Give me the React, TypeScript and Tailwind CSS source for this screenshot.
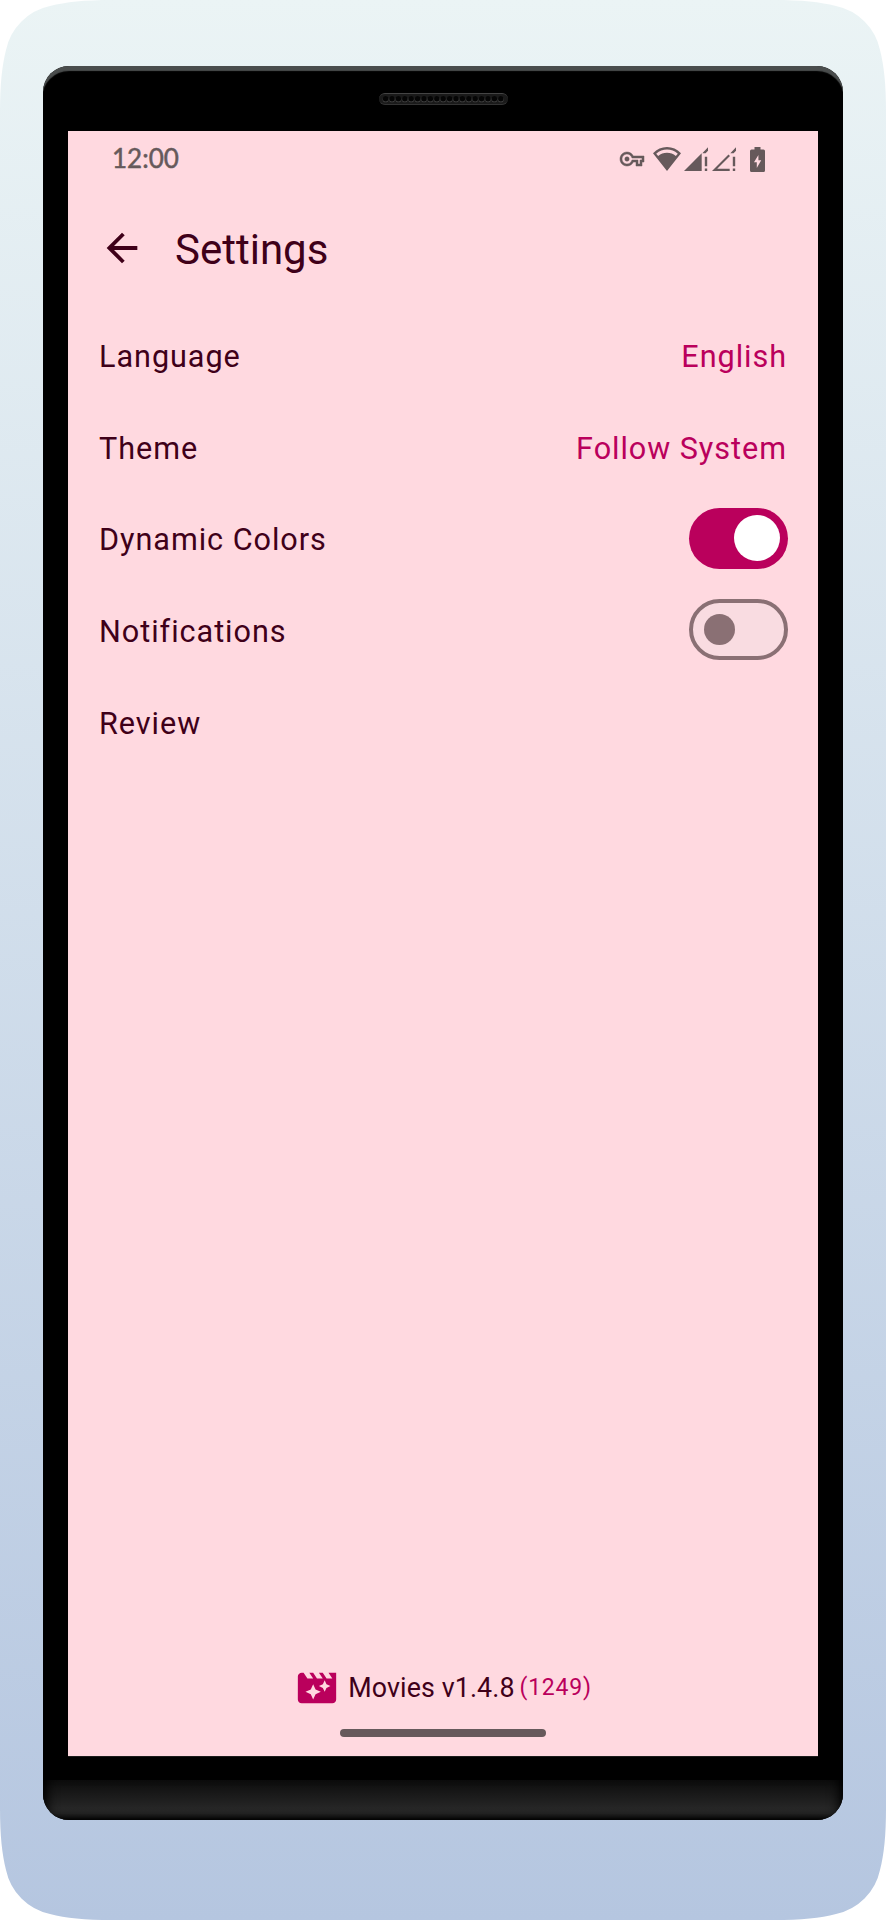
import React from "react";

function KeyIcon() {
  return (
    <svg className="h-6 w-6 overflow-visible" viewBox="0 0 24 24" fill="currentColor">
      <path
        stroke="currentColor"
        strokeWidth="0.5"
        d="M22 19h-6v-4h-2.68c-1.14 2.42-3.6 4-6.32 4-3.86 0-7-3.14-7-7s3.14-7 7-7c2.72 0 5.17 1.58 6.32 4H24v6h-2v4zm-4-2h2v-4h2v-2H11.94l-.23-.67C11.01 8.34 9.11 7 7 7c-2.76 0-5 2.24-5 5s2.24 5 5 5c2.11 0 4.01-1.34 4.71-3.33l.23-.67H18v4zM7 14.2a2.2 2.2 0 1 1 0-4.4 2.2 2.2 0 0 1 0 4.4z"
      />
    </svg>
  );
}

function WifiIcon() {
  return (
    <svg className="h-6 w-7" viewBox="0 0 28 24" fill="currentColor">
      <path
        fillRule="evenodd"
        d="M0 6.3Q6 0 14 0T28 6.3L14 23.9ZM3.2 6.8L5.2 9Q9 5.8 14 5.8T22.8 9L24.8 6.8Q20 2.6 14 2.6T3.2 6.8Z"
      />
    </svg>
  );
}

function SignalIcon({ filled }: { filled: boolean }) {
  return (
    <svg className="h-6 w-6" viewBox="0 0 24 24" fill="currentColor">
      {filled ? <path d="M0 24L17.7 6.3V24Z" /> : <path d="M0 24L16.5 7.5L18 9L5.2 21.8H17.7V24Z" />}
      <path d="M18.3 6.2L24 0.3V3.8L21.6 6.2ZM20.8 9.8H23.2V19.2H20.8ZM20.8 21.6H23.2V24H20.8Z" />
    </svg>
  );
}

function BatteryIcon() {
  return (
    <svg className="h-[25px] w-[15px]" viewBox="0 0 15 25" fill="currentColor">
      <path
        fillRule="evenodd"
        d="M4.5 0H10.5V2.5H13.5Q15 2.5 15 4V23.5Q15 25 13.5 25H1.5Q0 25 0 23.5V4Q0 2.5 1.5 2.5H4.5ZM8.4 8L4 15.2H6.8V21L11.2 13.2H8.4Z"
      />
    </svg>
  );
}

function Speaker() {
  return (
    <div className="flex h-3 w-[129px] items-center justify-center rounded-full border-t border-b border-t-[#444] border-b-[#333] bg-[#1a1a1a]">
      <svg className="h-2 w-[122px]" viewBox="0 0 122 8">
        {Array.from({ length: 19 }, (_, i) => (
          <g key={i}>
            <circle cx={3.6 + i * 6.4} cy={4.4} r={2.9} fill="#444" />
            <circle cx={3.6 + i * 6.4} cy={3.7} r={2.7} fill="#050505" />
          </g>
        ))}
      </svg>
    </div>
  );
}

function Switch({ on }: { on: boolean }) {
  return on ? (
    <div className="-mr-px mb-1 flex h-[61px] w-[99.5px] items-center justify-end rounded-full bg-[#ba005c] pr-[7.7px]">
      <div className="h-[46px] w-[46px] rounded-full bg-white" />
    </div>
  ) : (
    <div className="-mr-px mb-1 flex h-[61px] w-[99.5px] items-center rounded-full border-4 border-[#8a7074] bg-[#f9dce1] pl-[11.3px]">
      <div className="h-[31px] w-[31px] rounded-full bg-[#8a7074]" />
    </div>
  );
}

function Row({ label, children }: { label: string; children?: React.ReactNode }) {
  return (
    <div className="flex h-[91.7px] items-center justify-between px-[31px] text-[30.6px] tracking-[0.96px]">
      <span>{label}</span>
      {children}
    </div>
  );
}

export default function App() {
  return (
    <div className="h-[1920px] w-[886px] bg-white font-['Roboto',sans-serif]">
      <div className="flex h-full w-full flex-col items-center bg-linear-to-b from-[#ebf4f5] to-[#b5c6e0] pt-[66px] [clip-path:path('M0_112C0_84_2_66_6_50A57_57_0_0_1_50_6C66_2_84_0_112_0H774C802_0_820_2_836_6A57_57_0_0_1_880_50C884_66_886_84_886_112V1808C886_1836_884_1854_880_1870A57_57_0_0_1_836_1914C820_1918_802_1920_774_1920H112C84_1920_66_1918_50_1914A57_57_0_0_1_6_1870C2_1854_0_1836_0_1808Z')]">
        <div className="flex h-[1753.5px] w-[800px] flex-col items-center overflow-hidden rounded-[26px] bg-black shadow-[inset_0_6px_1px_-1px_#4a4d4d]">
          <div className="flex h-[65px] items-start pt-[27px]">
            <Speaker />
          </div>

          <div className="flex h-[1625px] w-[750px] flex-col bg-[#ffd9e0] text-[#3f0019]">
            <div className="flex h-[56px] items-center justify-between pr-[53px] pl-11 text-[#66595b]">
              <span className="mb-px font-['Lato',sans-serif] text-[26px] [-webkit-text-stroke:0.5px_#66595b]">12:00</span>
              <div className="flex items-center">
                <KeyIcon />
                <div className="ml-[9px]"><WifiIcon /></div>
                <div className="ml-[3px]"><SignalIcon filled /></div>
                <div className="ml-1"><SignalIcon filled={false} /></div>
                <div className="ml-[14px]"><BatteryIcon /></div>
              </div>
            </div>

            <header className="flex h-[123px] items-center pl-[31px]">
              <svg className="mb-[2px] h-[46px] w-[46px]" viewBox="0 0 24 24" fill="currentColor">
                <path d="M20 11H7.83l5.59-5.59L12 4l-8 8 8 8 1.41-1.41L7.83 13H20v-2z" />
              </svg>
              <h1 className="mt-[2px] ml-[30px] text-[42px]">Settings</h1>
            </header>

            <main className="flex-1 pt-px">
              <Row label="Language">
                <span className="text-[#ba005c]">English</span>
              </Row>
              <Row label="Theme">
                <span className="text-[#ba005c]">Follow System</span>
              </Row>
              <Row label="Dynamic Colors">
                <Switch on />
              </Row>
              <Row label="Notifications">
                <Switch on={false} />
              </Row>
              <Row label="Review" />
            </main>

            <footer className="flex h-[91px] flex-col items-center">
              <div className="flex h-[46px] items-center">
                <svg className="h-[46px] w-[46px] text-[#ba005c]" viewBox="0 0 24 24" fill="currentColor">
                  <path d="M18 4l2 3h-3l-2-3h-2l2 3h-3l-2-3H8l2 3H7L5 4H4c-1.1 0-1.99.9-1.99 2L2 18c0 1.1.9 2 2 2h16c1.1 0 2-.9 2-2V4h-4zm-6.75 11.25L10 18l-1.25-2.75L6 14l2.75-1.25L10 10l1.25 2.75L14 14l-2.75 1.25zm5.69-3.31L16 14l-.94-2.06L13 11l2.06-.94L16 8l.94 2.06L19 11l-2.06.94z" />
                </svg>
                <span className="ml-2 text-[26.8px] tracking-[0.1px]">Movies v1.4.8</span>
                <span className="ml-[5px] text-[23px] tracking-[0.76px] text-[#ba005c]">(1249)</span>
              </div>
              <div className="mt-[18px] h-2 w-[206px] rounded-full bg-[#66595b]" />
            </footer>
          </div>

          <div className="h-px w-[750px] bg-[#1c1c1c]" />
          <div className="mt-[22.5px] h-10 w-full bg-linear-to-b from-[#0d0d0d] via-[#262626] via-70% to-[#222] shadow-[inset_0_-5px_5px_-2px_#000,inset_12px_0_12px_-8px_#000,inset_-12px_0_12px_-8px_#000]" />
        </div>
      </div>
    </div>
  );
}
